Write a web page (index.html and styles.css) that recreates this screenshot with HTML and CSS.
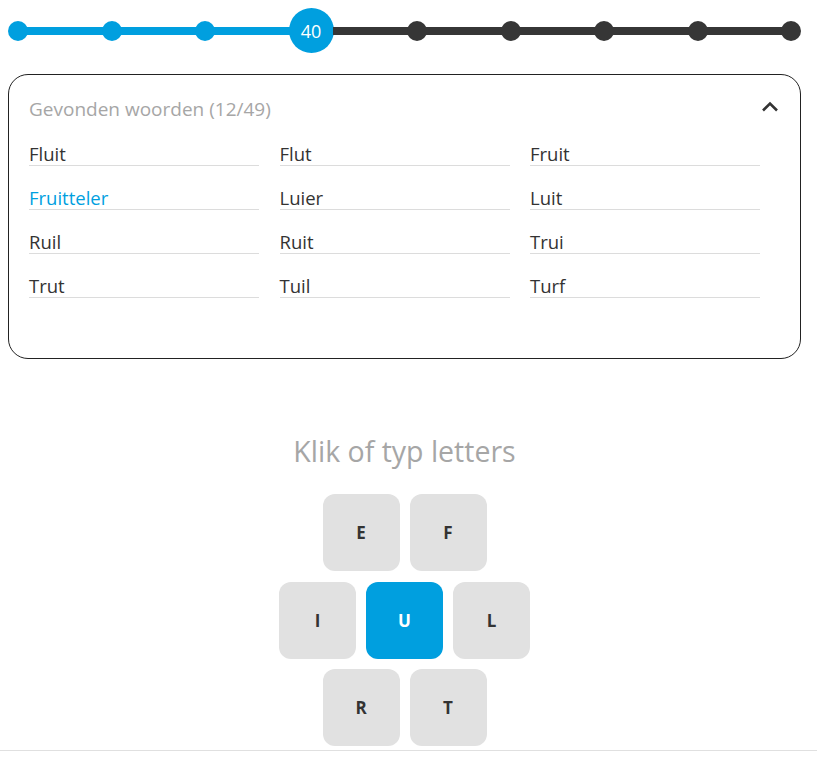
FILE: index.html
```html
<!DOCTYPE html>
<html lang="nl">
<head>
  <meta charset="UTF-8">
  <meta name="viewport" content="width=device-width, initial-scale=1.0">
  <title>Woordzoeker</title>
  <link rel="stylesheet" href="styles.css">
</head>
<body>
  <div class="page">
    <div class="progress">
      <span class="dot done"></span><span class="seg done"></span>
      <span class="dot done"></span><span class="seg done"></span>
      <span class="dot done"></span><span class="seg done"></span>
      <span class="current">40</span><span class="seg"></span>
      <span class="dot"></span><span class="seg"></span>
      <span class="dot"></span><span class="seg"></span>
      <span class="dot"></span><span class="seg"></span>
      <span class="dot"></span><span class="seg"></span>
      <span class="dot"></span>
    </div>

    <div class="found-card">
      <div class="found-header">
        <span class="found-title">Gevonden woorden (12/49)</span>
        <svg class="chevron" width="18" height="11" viewBox="0 0 18 11">
          <path d="M2 9.5 L9 2.5 L16 9.5" fill="none" stroke="#333" stroke-width="2.6"/>
        </svg>
      </div>
      <div class="word-grid">
        <div class="word">Fluit</div>
        <div class="word">Flut</div>
        <div class="word">Fruit</div>
        <div class="word latest">Fruitteler</div>
        <div class="word">Luier</div>
        <div class="word">Luit</div>
        <div class="word">Ruil</div>
        <div class="word">Ruit</div>
        <div class="word">Trui</div>
        <div class="word">Trut</div>
        <div class="word">Tuil</div>
        <div class="word">Turf</div>
      </div>
    </div>

    <div class="prompt">Klik of typ letters</div>

    <div class="keys">
      <div class="key-row">
        <button class="key">E</button>
        <button class="key">F</button>
      </div>
      <div class="key-row">
        <button class="key">I</button>
        <button class="key center">U</button>
        <button class="key">L</button>
      </div>
      <div class="key-row">
        <button class="key">R</button>
        <button class="key">T</button>
      </div>
    </div>
  </div>
  <div class="bottom-line"></div>
</body>
</html>
```

FILE: styles.css
```css
body {
  margin: 0;
  font-family: "Open Sans", "Noto Sans", sans-serif;
  color: #333;
  background: #fff;
}
.page {
  width: 793px;
  padding: 8px 0 4px 8px;
}
.progress {
  display: flex;
  align-items: center;
  height: 45px;
}
.dot {
  width: 20px;
  height: 20px;
  border-radius: 50%;
  background: #363636;
  flex: none;
}
.seg {
  flex: 1;
  height: 8px;
  background: #363636;
  margin: 0 -1px;
}
.dot.done, .seg.done {
  background: #009fdf;
}
.current {
  width: 45px;
  height: 45px;
  border-radius: 50%;
  background: #009fdf;
  color: #fff;
  font-size: 18px;
  display: flex;
  align-items: center;
  justify-content: center;
  flex: none;
}
.found-card {
  margin-top: 21px;
  border: 1px solid #222;
  border-radius: 20px;
  padding: 22px 21px 60px 20px;
}
.found-header {
  display: flex;
  justify-content: space-between;
  align-items: center;
  height: 24px;
}
.found-title {
  font-size: 19px;
  color: #a6a6a6;
}
.chevron {
  margin-top: -6px;
}
.word-grid {
  margin-top: 21px;
  width: 731px;
  display: grid;
  grid-template-columns: repeat(3, 230px);
  column-gap: 20.5px;
  row-gap: 20px;
}
.word {
  font-size: 18.5px;
  line-height: 23px;
  border-bottom: 1px solid #dcdcdc;
}
.word.latest {
  color: #009fdf;
}
.prompt {
  margin-top: 74px;
  text-align: center;
  font-size: 28.5px;
  line-height: 36px;
  color: #a6a6a6;
}
.keys {
  margin-top: 25px;
  display: flex;
  flex-direction: column;
  align-items: center;
  gap: 10.5px;
}
.key-row {
  display: flex;
  gap: 10px;
}
.key {
  width: 77px;
  height: 77px;
  border: none;
  border-radius: 12px;
  background: #e1e1e1;
  color: #333;
  font-family: "Open Sans", "Noto Sans", sans-serif;
  font-size: 17px;
  font-weight: bold;
  padding: 0;
  cursor: pointer;
}
.key.center {
  background: #009fdf;
  color: #fff;
}
.bottom-line {
  height: 1px;
  background: #e0e0e0;
}
```
